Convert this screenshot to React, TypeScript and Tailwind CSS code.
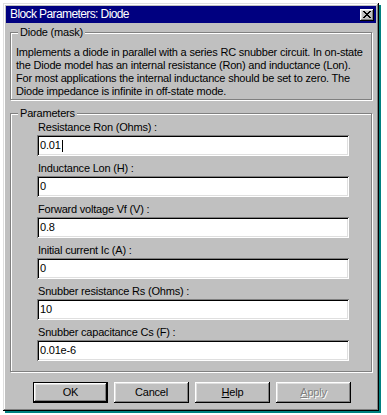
import React from 'react';

interface Field {
  label: string;
  value: string;
}

const fields: Field[] = [
  { label: 'Resistance Ron (Ohms) :', value: '0.01' },
  { label: 'Inductance Lon (H) :', value: '0' },
  { label: 'Forward voltage Vf (V) :', value: '0.8' },
  { label: 'Initial current Ic (A) :', value: '0' },
  { label: 'Snubber resistance Rs (Ohms) :', value: '10' },
  { label: 'Snubber capacitance Cs (F) :', value: '0.01e-6' },
];

const raised =
  'shadow-[inset_-1px_-1px_0_#000,inset_1px_1px_0_#fff,inset_-2px_-2px_0_#808080,inset_2px_2px_0_#dfdfdf]';

const App: React.FC = () => {
  return (
    <div className="min-h-screen bg-white pt-[3px] pl-[3px] font-['Liberation_Sans',Arial,sans-serif] text-[11px] leading-[13px] tracking-[-0.2px] text-black">
      <div className="w-[376px] h-[408px] bg-[#c0c0c0] p-[3px] flex flex-col shadow-[inset_-1px_-1px_0_#000,inset_1px_1px_0_#dfdfdf,inset_-2px_-2px_0_#808080,inset_2px_2px_0_#fff,2px_2px_0_#008080]">
        {/* title bar */}
        <div className="h-[17px] bg-[#000080] flex items-center justify-between pl-[4px] pr-[2px]">
          <span className="text-white text-[12px] tracking-[-0.6px]">Block Parameters: Diode</span>
          <button className={`w-[14px] h-[12px] bg-[#c0c0c0] flex items-center justify-center ${raised}`}>
            <svg width="8" height="7" viewBox="0 0 8 7" shapeRendering="crispEdges">
              <path d="M0 0h2v1H0zM6 0h2v1H6zM1 1h2v1H1zM5 1h2v1H5zM2 2h4v1H2zM3 3h2v1H3zM2 4h4v1H2zM1 5h2v1H1zM5 5h2v1H5zM0 6h2v1H0zM6 6h2v1H6z" fill="#000" />
            </svg>
          </button>
        </div>

        {/* description */}
        <fieldset className="mt-[3px] mx-[4px] border border-[#808080] shadow-[inset_1px_1px_0_#fff,1px_1px_0_#fff] pl-[5px] pt-[7px] pb-[1px]">
          <legend className="ml-[2px] px-[2px] bg-[#c0c0c0]">Diode (mask)</legend>
          <p className="whitespace-nowrap">
            Implements a diode in parallel with a series RC snubber circuit. In on-state
            <br />
            the Diode model has an internal resistance (Ron) and inductance (Lon).
            <br />
            For most applications the internal inductance should be set to zero. The
            <br />
            Diode impedance is infinite in off-state mode.
          </p>
        </fieldset>

        {/* parameters */}
        <fieldset className="mt-[7px] mx-[4px] border border-[#808080] shadow-[inset_1px_1px_0_#fff,1px_1px_0_#fff] pl-[26px] pt-[1px] pb-[10px]">
          <legend className="-ml-[19px] px-[2px] bg-[#c0c0c0]">Parameters</legend>
          <div className="flex flex-col gap-[6px]">
            {fields.map((f, i) => (
              <div key={f.label} className="flex flex-col">
                <label className="pl-[1px]">{f.label}</label>
                <div className="mt-[1px] w-[312px] h-[21px] bg-white flex items-center pl-[3px] shadow-[inset_1px_1px_0_#808080,inset_-1px_-1px_0_#fff,inset_2px_2px_0_#000,inset_-2px_-2px_0_#dfdfdf]">
                  <span>{f.value}</span>
                  {i === 0 && <span className="ml-[1px] w-[1px] h-[12px] bg-black" />}
                </div>
              </div>
            ))}
          </div>
        </fieldset>

        {/* buttons */}
        <div className="mt-[10px] pl-[27px] flex gap-[6px]">
          <button className={`w-[75px] h-[21px] border border-black ${raised}`}>OK</button>
          <button className={`w-[75px] h-[21px] ${raised}`}>Cancel</button>
          <button className={`w-[75px] h-[21px] ${raised}`}>
            <span className="underline">H</span>elp
          </button>
          <button disabled className={`w-[75px] h-[21px] text-[#808080] [text-shadow:1px_1px_0_#fff] ${raised}`}>
            <span className="underline">A</span>pply
          </button>
        </div>
      </div>
    </div>
  );
};

export default App;
